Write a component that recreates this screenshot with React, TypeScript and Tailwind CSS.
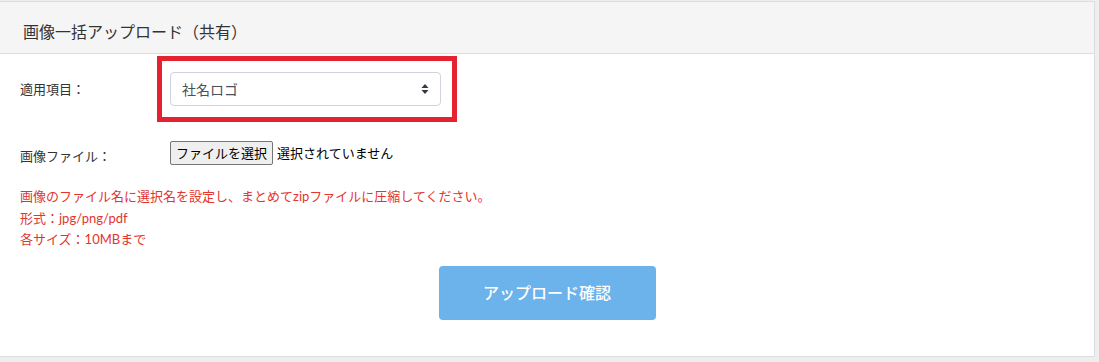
import { useState } from 'react';

const font = 'font-[Lato,"Noto_Sans_CJK_JP",sans-serif]';

function SortArrows() {
  return (
    <svg width="8" height="10" viewBox="0 0 8 10" className="text-[#343a40]">
      <path d="M4 0 L7.5 4 H0.5 Z" fill="currentColor" />
      <path d="M4 10 L7.5 6 H0.5 Z" fill="currentColor" />
    </svg>
  );
}

export default function App() {
  const [item, setItem] = useState('社名ロゴ');

  return (
    <div className={`${font} min-h-[362px] bg-[#eeeeee] pt-px pr-[4px] pb-[4px] text-[#333]`}>
      <div className="border border-l-0 border-[#dddddd] bg-white">
        {/* header */}
        <div className="h-[52px] border-b border-[#dddddd] bg-[#f5f5f5] px-[23px] pt-[18px]">
          <h2 className="text-[16px] leading-[24px] font-normal">画像一括アップロード（共有）</h2>
        </div>

        <div className="px-[20px] pt-[18px] pb-[36px]">
          {/* target item */}
          <div className="flex items-center">
            <label className="w-[150px] text-[13px] leading-[20px]">適用項目：</label>
            <div className="relative w-[271px] h-[34px]">
              <div className="pointer-events-none absolute -left-[13px] -top-[16px] w-[300px] h-[66px] border-[5px] border-[#e52230]" />
              <div className="flex h-full items-center justify-between rounded-[4px] border border-[#cfd4da] bg-white pl-[11px] pr-[11px] text-[14px] text-[#495057]">
                <span onClick={() => setItem(item)}>{item}</span>
                <SortArrows />
              </div>
            </div>
          </div>

          {/* file */}
          <div className="mt-[35px] flex items-start">
            <label className="w-[150px] pt-[5px] text-[13px] leading-[20px]">画像ファイル：</label>
            <div className="flex items-center gap-[4px] font-['Noto_Sans_CJK_JP',sans-serif] text-[13px] text-black">
              <button className="h-[24px] rounded-[2px] border border-[#767676] bg-[#efefef] px-[5px] leading-[20px]">
                ファイルを選択
              </button>
              <span>選択されていません</span>
            </div>
          </div>

          {/* notes */}
          <div className="mt-[20px] text-[13px] leading-[21.5px] text-[#e3342f]">
            <p>画像のファイル名に選択名を設定し、まとめてzipファイルに圧縮してください。</p>
            <p>形式：jpg/png/pdf</p>
            <p>各サイズ：10MBまで</p>
          </div>

          <div className="mt-[15px] flex justify-center">
            <button className="h-[54px] w-[217px] rounded-[4px] bg-[#6cb2eb] text-[16px] font-medium text-white">
              アップロード確認
            </button>
          </div>
        </div>
      </div>
    </div>
  );
}
